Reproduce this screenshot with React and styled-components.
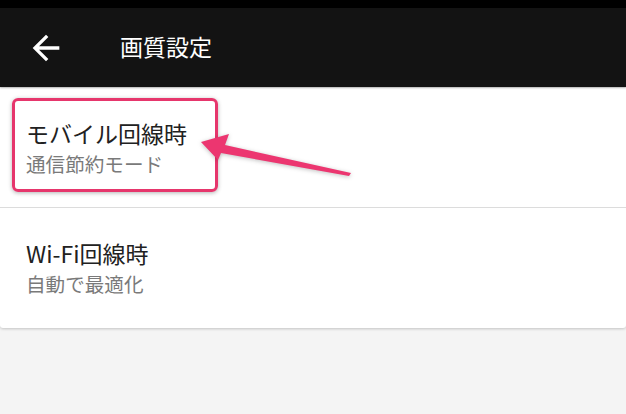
import React from 'react'
import styled, { createGlobalStyle } from 'styled-components'

const GlobalStyle = createGlobalStyle`
  html, body {
    margin: 0;
    padding: 0;
    background: #f4f4f4;
    font-family: "Noto Sans CJK JP", "Noto Sans", sans-serif;
  }
`

const settings = [
  { title: 'モバイル回線時', sub: '通信節約モード' },
  { title: 'Wi-Fi回線時', sub: '自動で最適化' },
]

function App() {
  return (
    <Screen>
      <GlobalStyle />
      <StatusBar />
      <Toolbar>
        <BackButton aria-label='back'>
          <svg width='40' height='40' viewBox='0 0 24 24'>
            <path fill='#fff' d='M20 11H7.83l5.59-5.59L12 4l-8 8 8 8 1.41-1.41L7.83 13H20v-2z' />
          </svg>
        </BackButton>
        <Title>画質設定</Title>
      </Toolbar>
      <Card>
        {settings.map((item) => (
          <Row key={item.title}>
            <RowTitle>{item.title}</RowTitle>
            <RowSub>{item.sub}</RowSub>
          </Row>
        ))}
      </Card>
      <Highlight />
      <Pointer width='160' height='50' viewBox='196 130 160 50'>
        <polygon
          fill='#ec3670'
          points='201,142 229,134 225,145 351,173 349,176 221,153 218,160'
        />
      </Pointer>
    </Screen>
  )
}

const Screen = styled.div`
  position: relative;
  width: 626px;
  height: 414px;
  overflow: hidden;
  background: #f4f4f4;
`

const StatusBar = styled.div`
  height: 8px;
  background: #000;
`

const Toolbar = styled.header`
  height: 79px;
  background: #131313;
  display: flex;
  align-items: center;
  box-shadow: 0 1px 2px rgba(0, 0, 0, 0.25);
  position: relative;
  z-index: 1;
`

const BackButton = styled.div`
  width: 40px;
  height: 40px;
  margin-left: 26px;
  display: flex;
`

const Title = styled.h1`
  margin: -3px 0 0 54px;
  color: #fff;
  font-size: 23px;
  font-weight: 400;
  line-height: 30px;
`

const Card = styled.div`
  margin-top: 1px;
  background: #fff;
  box-shadow: 0 1px 3px rgba(0, 0, 0, 0.2);
  border-radius: 0 0 3px 3px;
`

const Row = styled.div`
  height: 120px;
  box-sizing: border-box;
  padding: 30px 26px 0;
  display: flex;
  flex-direction: column;
  gap: 3px;
  &:not(:last-child) {
    border-bottom: 1px solid #dcdcdc;
  }
`

const RowTitle = styled.div`
  font-size: 23px;
  line-height: 30px;
  color: #212121;
`

const RowSub = styled.div`
  font-size: 19.6px;
  line-height: 26px;
  color: #7a7a7a;
`

const Highlight = styled.div`
  position: absolute;
  left: 12px;
  top: 98px;
  width: 200px;
  height: 88px;
  border: 3px solid #e6366c;
  border-radius: 6px;
  box-shadow: 0 1px 4px rgba(0, 0, 0, 0.3);
`

const Pointer = styled.svg`
  position: absolute;
  left: 196px;
  top: 130px;
  filter: drop-shadow(0 1px 2px rgba(0, 0, 0, 0.25));
`

export default App
